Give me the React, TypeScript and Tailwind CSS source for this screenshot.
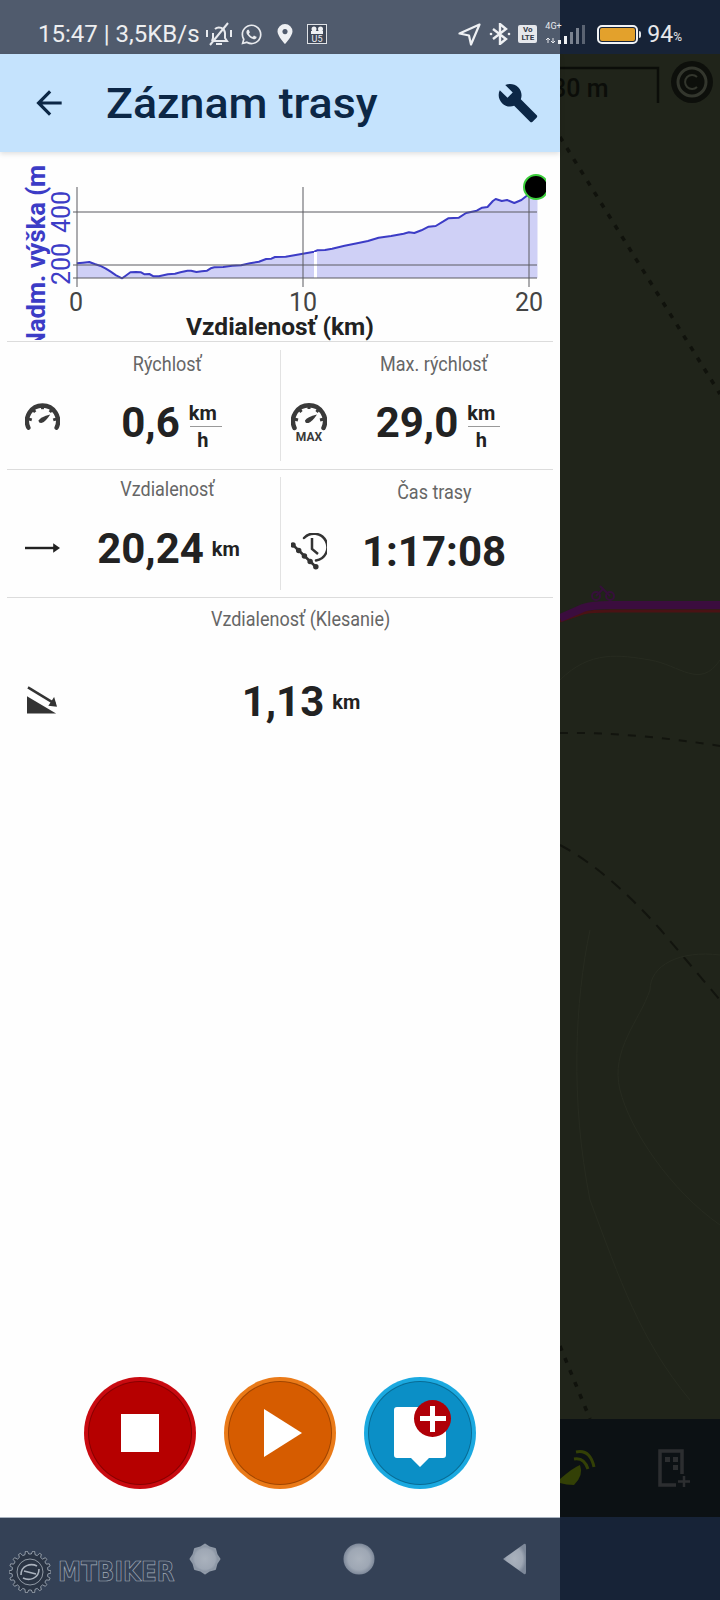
import * as React from "react";
import { MdArrowBack, MdBuild } from "react-icons/md";
import { FaWhatsapp } from "react-icons/fa";

// elevation profile, taken in zoomed coordinates and mapped back to px
const raw: Array<[number, number]> = [
  [215, 325], [232, 323], [250, 321], [265, 327], [280, 332], [295, 340], [310, 350], [325, 361], [342, 370], [352, 362], [365, 352], [380, 351], [395, 352],
  [405, 358], [418, 357], [430, 364], [445, 364], [470, 358], [490, 356], [505, 352], [525, 347], [535, 347], [550, 351], [565, 349], [580, 347], [590, 340], [600, 337],
  [625, 336], [650, 332], [675, 331], [700, 325], [725, 320], [745, 312], [760, 311], [770, 306], [800, 305], [840, 298], [880, 290],
  [888, 286], [910, 285], [930, 281], [965, 272], [1000, 265], [1030, 258], [1060, 248], [1095, 243], [1130, 236], [1145, 232], [1160, 234], [1180, 226], [1200, 215], [1220, 213],
  [1240, 200], [1255, 190], [1285, 188], [1305, 174], [1335, 167], [1350, 158], [1365, 156], [1380, 138], [1388, 132], [1405, 138], [1420, 135],
  [1440, 144], [1460, 135], [1475, 122], [1505, 100],
];
const CHART_TOP = 153;
const pts = raw.map(([x, y]) => [x / 2.8, 155 + y / 3 - CHART_TOP] as const);
const line = pts.map(([x, y]) => `${x.toFixed(1)},${y.toFixed(1)}`).join(" ");
const BASE = 278 - CHART_TOP;
const area = `77,${BASE} ${line} 537.5,${BASE}`;

function Chart() {
  const font = { fontFamily: "Roboto, sans-serif" };
  return (
    <svg width={560} height={188} className="mt-[1px] block shrink-0" style={font}>
      <polygon points={area} fill="#cfd0f6" />
      <polyline points={line} fill="none" stroke="#3c3cc6" strokeWidth={2} strokeLinejoin="round" />
      <rect x={314} y={99} width={3} height={BASE - 99} fill="#ffffff" />
      <g stroke="#5a5a60" strokeWidth={1}>
        <line x1={77} y1={34} x2={77} y2={134} />
        <line x1={303} y1={34} x2={303} y2={134} />
        <line x1={529} y1={34} x2={529} y2={134} />
        <line x1={73} y1={59} x2={537} y2={59} />
        <line x1={73} y1={112} x2={537} y2={112} />
        <line x1={73} y1={125} x2={537} y2={125} />
      </g>
      <clipPath id="dot">
        <rect x={500} y={0} width={46} height={80} />
      </clipPath>
      <circle cx={536} cy={34} r={12} fill="#000000" stroke="#3ccf3c" strokeWidth={2} clipPath="url(#dot)" />
      <g fill="#444444" fontSize={25} textAnchor="middle">
        <text x={76} y={158}>0</text>
        <text x={303} y={158}>10</text>
        <text x={529} y={158}>20</text>
      </g>
      <text x={280} y={182} textAnchor="middle" fontSize={24.5} fontWeight={700} fill="#222222">
        Vzdialenosť (km)
      </text>
      <g fill="#3c3cc6" fontSize={25} textAnchor="middle">
        <text transform="translate(70 111) rotate(-90)">200</text>
        <text transform="translate(70 59) rotate(-90)">400</text>
      </g>
      <clipPath id="axis">
        <rect x={20} y={12} width={32} height={175} />
      </clipPath>
      <g clipPath="url(#axis)">
        <text transform="translate(45 100) rotate(-90)" textAnchor="middle" fontSize={25.5} fontWeight={700} fill="#3c3cc6">
          Nadm. výška (m)
        </text>
      </g>
    </svg>
  );
}

function Gauge({ max }: { max?: boolean }) {
  return (
    <svg width={36} height={max ? 40 : 28} viewBox={max ? "0 0 36 40" : "0 0 36 28"} className="block">
      <path d="M3.5 27 A16 16 0 1 1 32.5 27" transform="translate(0 -1)" fill="none" stroke="#3a3a3a" strokeWidth={4.5} strokeLinecap="round" />
      <g stroke="#3a3a3a" strokeWidth={3}>
        <line x1={18} y1={3} x2={18} y2={7} />
        <line x1={8} y1={7} x2={10.5} y2={10} />
        <line x1={28} y1={7} x2={25.5} y2={10} />
        <line x1={3} y1={17} x2={7} y2={18} />
        <line x1={33} y1={17} x2={29} y2={18} />
      </g>
      <path d="M14 18.5 Q16 15 26 12.5 Q21 20 17.5 21 Q14 21.5 14 18.5Z" fill="#3a3a3a" />
      {max && (
        <text x={18} y={38.5} textAnchor="middle" fontSize={12} fontWeight={700} fill="#3a3a3a" fontFamily="Roboto, sans-serif">
          MAX
        </text>
      )}
    </svg>
  );
}

function ArrowRight() {
  return (
    <svg width={36} height={12} viewBox="0 0 36 12" className="block">
      <line x1={0} y1={6} x2={30} y2={6} stroke="#222222" strokeWidth={2.5} />
      <path d="M29 1 L36 6 L29 11Z" fill="#222222" />
    </svg>
  );
}

function ClockChain() {
  return (
    <svg width={36} height={37} viewBox="0 0 36 37" className="block">
      <path d="M13 5 A13.5 13.5 0 1 1 25 27.5" fill="none" stroke="#333333" strokeWidth={2.5} strokeLinecap="round" />
      <path d="M21 5 V16 L27 21" fill="none" stroke="#333333" strokeWidth={2.5} />
      <path d="M2 12 L25 34" stroke="#333333" strokeWidth={2.5} />
      <path d="M2 12 L25 34" stroke="#333333" strokeWidth={5.5} strokeLinecap="round" strokeDasharray="0 7.9" />
    </svg>
  );
}

function Slope() {
  return (
    <svg width={32} height={28} viewBox="0 0 32 28" className="block">
      <path d="M0 10 L30 28 L0 28Z" fill="#333333" />
      <line x1={1} y1={1} x2={29} y2={18} stroke="#333333" strokeWidth={2.5} />
      <path d="M31 21 L22 20 L28 11Z" fill="#333333" />
    </svg>
  );
}

function KmH() {
  return (
    <div className="mt-[8px] flex w-[32px] flex-col items-center font-bold leading-none text-[#222222]">
      <span className="pr-[6px] text-[20px] leading-[22px]">km</span>
      <span className="my-[2px] block h-[1px] w-full bg-[#999999]" />
      <span className="pr-[6px] text-[20px] leading-[22px]">h</span>
    </div>
  );
}

type MetricProps = {
  label: string;
  value: string;
  icon: React.ReactNode;
  unit?: "km" | "kmh";
  labelPad: string;
  valueTop: string;
  iconTop: string;
  columns: string;
  rowH: string;
  shift?: string;
};

function Metric({ label, value, icon, unit, labelPad, valueTop, iconTop, columns, rowH, shift }: MetricProps) {
  return (
    <div className={`grid ${columns} ${rowH}`}>
      <div />
      <div className={`text-center text-[#666666] ${labelPad}`}>
        <span className="inline-block origin-center scale-x-[0.9] whitespace-nowrap text-[20px] leading-[24px]">{label}</span>
      </div>
      <div className={`flex items-center self-start ${iconTop}`}>{icon}</div>
      <div className={`flex items-center justify-center self-start ${valueTop} ${shift ?? ""}`}>
        <span className="text-[42px] font-bold leading-[48px] text-[#222222]">{value}</span>
        {unit === "km" && <span className="ml-[8px] text-[20px] font-bold text-[#222222]">km</span>}
        {unit === "kmh" && (
          <div className="ml-[10px]">
            <KmH />
          </div>
        )}
      </div>
    </div>
  );
}

function StatusBar() {
  return (
    <div className="absolute left-0 top-0 flex h-[54px] w-[720px] items-center pt-[14px] text-white/90">
      <span className="ml-[38px] w-[164px] whitespace-nowrap text-[24px] leading-none">15:47 | 3,5KB/s</span>
      {/* muted bell */}
      <svg width={30} height={24} viewBox="0 0 30 24" className="ml-[2px]" fill="none" stroke="#e8eaee" strokeWidth={2}>
        <path d="M8 19 h15 l-2 -3 v-5 a6 6 0 0 0 -10 -4 M9 11 v5 l-1 3" />
        <path d="M12 22 h6" />
        <path d="M6 23 L24 1" />
        <path d="M3 8 v7 M27 8 v7" />
      </svg>
      <FaWhatsapp size={23} color="#e8eaee" className="ml-[6px]" />
      <svg width={16} height={20} viewBox="0 0 16 20" className="ml-[14px]">
        <path fillRule="evenodd" fill="#eef0f3" d="M8 0 a7.5 7.5 0 0 1 7.5 7.5 C15.5 12 8 20 8 20 S.5 12 .5 7.5 A7.5 7.5 0 0 1 8 0Z M8 5 a2.6 2.6 0 1 0 .01 0Z" />
      </svg>
      <svg width={20} height={20} viewBox="0 0 20 20" className="ml-[14px]" style={{ fontFamily: "Roboto, sans-serif" }}>
        <rect x={0.5} y={0.5} width={19} height={19} fill="#3f4858" stroke="#dfe2e6" />
        <circle cx={7} cy={5} r={2.5} fill="#eef0f3" />
        <circle cx={13.5} cy={5} r={2.5} fill="#eef0f3" />
        <rect x={4} y={7} width={12} height={3} fill="#eef0f3" />
        <text x={10} y={18} textAnchor="middle" fontSize={9} fill="#eef0f3">U5</text>
      </svg>
      <div className="flex-1" />
      <svg width={23} height={23} viewBox="0 0 23 23" fill="none" stroke="#eef0f3" strokeWidth={2.2} strokeLinejoin="round">
        <path d="M21.5 1.5 L1.5 10.5 L11 12.5 L13 21.5Z" />
      </svg>
      <svg width={22} height={22} viewBox="0 0 22 22" className="ml-[8px]" fill="none" stroke="#eef0f3" strokeWidth={2.4}>
        <path d="M4 6 L17 16 L11 21 V1 L17 6 L4 16" />
        <circle cx={2} cy={11} r={1.3} fill="#eef0f3" stroke="none" />
        <circle cx={20} cy={11} r={1.3} fill="#eef0f3" stroke="none" />
      </svg>
      <div className="ml-[7px] flex h-[18px] w-[19px] flex-col items-center justify-center rounded-[2px] bg-[#e6e8ec] font-[Roboto,sans-serif] text-[8px] font-bold leading-[8px] text-[#333b49]">
        <span>Vo</span>
        <span>LTE</span>
      </div>
      {/* 4G+ and signal */}
      <div className="relative ml-[8px] h-[22px] w-[44px]">
        <span className="absolute left-0 top-[-2px] text-[9px] leading-[10px] text-[#e8eaee]">4G+</span>
        <svg width={44} height={22} viewBox="0 0 44 22" className="absolute left-0 top-0">
          <path d="M3 15 v5 M1 17 l2 -2 l2 2 M8 20 v-5 M6 18 l2 2 l2 -2" stroke="#e8eaee" strokeWidth={1} fill="none" />
          <rect x={13} y={17} width={3} height={4} fill="#eef0f3" />
          <rect x={19} y={13} width={3} height={8} fill="#eef0f3" />
          <rect x={25} y={9} width={3} height={12} fill="#7a8290" />
          <rect x={31} y={5} width={3} height={16} fill="#7a8290" />
          <rect x={37} y={2} width={3} height={19} fill="#5a6372" />
        </svg>
      </div>
      <div className="ml-[8px] flex items-center">
        <div className="flex h-[19px] w-[41px] items-center justify-center rounded-[5px] border-2 border-[#f2f3f5]">
          <div className="h-[13px] w-[35px] rounded-[2px] bg-[#e3a12c]" />
        </div>
        <div className="ml-[1px] h-[7px] w-[2px] rounded-r-sm bg-[#dfe2e6]" />
      </div>
      <span className="ml-[6px] text-[23px] leading-none">94</span>
      <span className="mr-[38px] mt-[6px] text-[12px] leading-none">%</span>
    </div>
  );
}

function Header() {
  return (
    <div className="z-10 flex h-[98px] shrink-0 items-center bg-[#c5e3fd] text-[#0c2746] shadow-[0_2px_5px_rgba(0,0,0,0.12)]">
      <MdArrowBack size={38} className="ml-[30px]" />
      <h1 className="ml-[38px] inline-block origin-left scale-x-[1.04] whitespace-nowrap text-[43px] font-medium leading-none">
        Záznam trasy
      </h1>
      <div className="flex-1" />
      <MdBuild size={42} className="mr-[21px]" />
    </div>
  );
}

function RoundButton({ ring, fill, children }: { ring: string; fill: string; children: React.ReactNode }) {
  return (
    <div className={`flex h-[112px] w-[112px] items-center justify-center rounded-full ${ring} p-[4px]`}>
      <div className={`relative flex h-full w-full items-center justify-center rounded-full border border-black/25 ${fill}`}>
        {children}
      </div>
    </div>
  );
}

function gearPath(cx: number, cy: number, r1: number, r2: number, teeth: number) {
  const out: string[] = [];
  for (let i = 0; i < teeth; i++) {
    const step = (Math.PI * 2) / teeth;
    const a = i * step;
    const ps = [
      [r1, a - step * 0.3],
      [r2, a - step * 0.15],
      [r2, a + step * 0.15],
      [r1, a + step * 0.3],
    ];
    ps.forEach(([r, t]) => out.push(`${(cx + r * Math.cos(t)).toFixed(1)},${(cy + r * Math.sin(t)).toFixed(1)}`));
  }
  return out.join(" ");
}

function NavBar() {
  return (
    <div className="relative flex h-[83px] shrink-0 items-start border-t border-[#a9b3c0] bg-[#344156] pt-[25px]">
      <svg width={0} height={0} className="absolute">
        <defs>
          <radialGradient id="navGlow">
            <stop offset="0%" stopColor="#aab2bd" />
            <stop offset="70%" stopColor="#9ea7b4" />
            <stop offset="100%" stopColor="#7d8899" />
          </radialGradient>
        </defs>
      </svg>
      <svg width={42} height={42} viewBox="0 0 42 42" className="absolute left-[9px] top-[33px]">
        <polygon points={gearPath(21, 21, 18, 21, 18)} fill="#2a3444" stroke="#aab2bd" strokeWidth={0.8} />
        <circle cx={21} cy={21} r={13} fill="none" stroke="#aab2bd" strokeWidth={0.8} />
        <path d="M12 24 C12 14 22 12 28 15 M30 18 C30 28 20 30 14 27 M15 20 L27 23" fill="none" stroke="#aab2bd" strokeWidth={1.6} />
      </svg>
      <span className="absolute left-[58px] top-[41px] origin-left scale-x-[0.89] font-[DejaVu_Sans,sans-serif] text-[26px] font-bold leading-[26px] text-transparent [-webkit-text-stroke:0.7px_#a3acb9]">
        MTBIKER
      </span>
      <svg width={32} height={32} viewBox="0 0 32 32" className="ml-[189px]">
        <polygon
          points="16,1.5 20.5,4.5 26,6 27.5,11.5 30.5,16 27.5,20.5 26,26 20.5,27.5 16,30.5 11.5,27.5 6,26 4.5,20.5 1.5,16 4.5,11.5 6,6 11.5,4.5"
          fill="url(#navGlow)"
          stroke="#8f99a7"
          strokeWidth={2}
          strokeLinejoin="round"
        />
      </svg>
      <svg width={32} height={32} viewBox="0 0 32 32" className="ml-[122px]">
        <circle cx={16} cy={16} r={15.5} fill="url(#navGlow)" />
      </svg>
      <svg width={24} height={32} viewBox="0 0 24 32" className="ml-[127px]">
        <path d="M1 16 L22 1 Q24 0 24 3 V29 Q24 32 22 31Z" fill="url(#navGlow)" />
      </svg>
    </div>
  );
}

function MapSide() {
  return (
    <svg width={160} height={1365} viewBox="560 54 160 1365" className="block flex-1 bg-[#20241a]" style={{ fontFamily: "Roboto, sans-serif" }}>
      <path d="M560 68 H658 V103" fill="none" stroke="#0b0d09" strokeWidth={2.5} />
      <text x={552} y={97} fontSize={25} fontWeight={500} fill="#0b0d09">
        30 m
      </text>
      <circle cx={692} cy={82} r={21} fill="#0d0f0b" />
      <circle cx={692} cy={82} r={14} fill="none" stroke="#33362d" strokeWidth={3} />
      <path d="M697 77 A7 7 0 1 0 697 87" fill="none" stroke="#33362d" strokeWidth={2} />
      <path d="M560 137 L720 394" fill="none" stroke="#10120c" strokeWidth={3.5} strokeDasharray="5 8" />
      <path d="M560 733 C610 732 670 738 720 746" fill="none" stroke="#12140e" strokeWidth={2} strokeDasharray="8 9" />
      <path d="M560 845 Q607 870 660 929 L720 1000" fill="none" stroke="#12140e" strokeWidth={2} strokeDasharray="12 9" />
      <path d="M560 1346 L590 1419" fill="none" stroke="#10120c" strokeWidth={3.5} strokeDasharray="5 8" />
      {/* faint contour lines */}
      <g fill="none" stroke="#272b20" strokeWidth={1}>
        <path d="M560 680 C590 650 620 655 650 660 C680 665 700 690 720 660" />
        <path d="M720 955 C680 950 650 965 650 990 C640 1020 610 1050 620 1090 C630 1130 670 1190 720 1225" />
        <path d="M590 930 C575 1000 570 1100 590 1200 C620 1280 640 1340 690 1400" />
      </g>
      <path d="M560 621 L583 613 Q592 611 610 611 H720" fill="none" stroke="#4a1214" strokeWidth={3} />
      <path d="M560 618 L583 608 Q592 605 610 605 H720" fill="none" stroke="#3b0d3e" strokeWidth={8} />
      <g fill="none" stroke="#35103a" strokeWidth={2}>
        <circle cx={596} cy={596} r={4} />
        <circle cx={610} cy={596} r={4} />
        <path d="M596 596 L603 589 L610 596 M600 586 L604 590" />
      </g>
    </svg>
  );
}

function MapBar() {
  return (
    <div className="relative h-[98px] shrink-0 overflow-hidden bg-[#0c1114]">
      <svg width={160} height={98} viewBox="0 0 160 98" className="block">
        <path d="M0 60 Q14 48 20 46 Q24 56 14 66 Q6 66 0 64 Z" fill="#334006" />
        <path d="M14 40 Q24 38 28 50 M16 33 Q30 30 34 48" fill="none" stroke="#334006" strokeWidth={3} />
        <path d="M122 55 V32 H100 V66 H116" fill="none" stroke="#2c2e30" strokeWidth={3.5} />
        <rect x={105} y={38} width={5} height={5} fill="#2c2e30" />
        <rect x={113} y={38} width={5} height={5} fill="#2c2e30" />
        <rect x={113} y={46} width={5} height={5} fill="#2c2e30" />
        <path d="M124 57 V68 M118 62.5 H130" stroke="#2c2e30" strokeWidth={2.5} />
      </svg>
    </div>
  );
}

export default function App() {
  const leftCols = "grid-cols-[35px_215px] grid-rows-[auto_1fr]";
  const rightCols = "grid-cols-[36px_214px] grid-rows-[auto_1fr]";
  return (
    <div className="relative flex h-[1600px] w-[720px] overflow-hidden font-[Roboto,sans-serif]">
      <div className="flex h-full w-[560px] shrink-0 flex-col bg-[#fefefe]">
        <div className="h-[54px] shrink-0 bg-[#505b6d]" />
        <Header />
        <Chart />

        <div className="mx-[7px] flex h-[128px] shrink-0 border-t border-[#dcdcdc]">
          <div className="w-[273px] pl-[18px]">
            <Metric
              label="Rýchlosť"
              value="0,6"
              unit="kmh"
              icon={<Gauge />}
              labelPad="pt-[10px]"
              valueTop="mt-[16px]"
              iconTop="mt-[24px]"
              shift="pl-[8px]"
              columns={leftCols}
              rowH="h-[126px]"
            />
          </div>
          <div className="my-[8px] w-[1px] bg-[#e2e2e2]" />
          <div className="flex-1 pl-[10px]">
            <Metric
              label="Max. rýchlosť"
              value="29,0"
              unit="kmh"
              icon={<Gauge max />}
              labelPad="pt-[10px]"
              valueTop="mt-[16px]"
              iconTop="mt-[24px]"
              shift="pl-[8px]"
              columns={rightCols}
              rowH="h-[126px]"
            />
          </div>
        </div>

        <div className="mx-[7px] flex h-[128px] shrink-0 border-t border-[#dcdcdc]">
          <div className="w-[273px] pl-[18px]">
            <Metric
              label="Vzdialenosť"
              value="20,24"
              unit="km"
              icon={<ArrowRight />}
              labelPad="pt-[7px]"
              valueTop="mt-[22px]"
              iconTop="mt-[39px]"
              shift="pl-[2px]"
              columns={leftCols}
              rowH="h-[126px]"
            />
          </div>
          <div className="my-[7px] w-[1px] bg-[#e2e2e2]" />
          <div className="flex-1 pl-[10px]">
            <Metric
              label="Čas trasy"
              value="1:17:08"
              icon={<ClockChain />}
              labelPad="pt-[10px]"
              valueTop="mt-[22px]"
              iconTop="mt-[27px]"
              columns={rightCols}
              rowH="h-[126px]"
            />
          </div>
        </div>

        <div className="mx-[7px] shrink-0 border-t border-[#dcdcdc] pl-[20px]">
          <Metric
            label="Vzdialenosť (Klesanie)"
            value="1,13"
            unit="km"
            icon={<Slope />}
            labelPad="pt-[9px]"
            valueTop="mt-[45px]"
            iconTop="mt-[53px]"
            columns="grid-cols-[31px_486px] grid-rows-[auto_1fr]"
            rowH="h-[140px]"
          />
        </div>

        <div className="flex-1" />

        <div className="flex h-[140px] shrink-0 items-start justify-start gap-[28px] pl-[84px]">
          <RoundButton ring="bg-[#c90a10]" fill="bg-[#b60000]">
            <div className="h-[38px] w-[38px] bg-white" />
          </RoundButton>
          <RoundButton ring="bg-[#ea7a18]" fill="bg-[#d65c00]">
            <svg width={38} height={48} viewBox="0 0 38 48" className="ml-[6px]">
              <path d="M0 0 L38 24 L0 48Z" fill="#ffffff" />
            </svg>
          </RoundButton>
          <RoundButton ring="bg-[#1ba9e0]" fill="bg-[#0b8fc6]">
            <svg width={52} height={61} viewBox="0 0 52 61" className="mt-[8px]">
              <path d="M3 0 H49 Q52 0 52 3 V48 Q52 51 49 51 H35 L26 60 L17 51 H3 Q0 51 0 48 V3 Q0 0 3 0Z" fill="#ffffff" />
            </svg>
            <div className="absolute left-[45px] top-[18px] flex h-[37px] w-[37px] items-center justify-center rounded-full bg-[#b00008]">
              <div className="absolute h-[26px] w-[5px] bg-white" />
              <div className="absolute h-[5px] w-[26px] bg-white" />
            </div>
          </RoundButton>
        </div>

        <NavBar />
      </div>

      <div className="flex h-full w-[160px] flex-col">
        <div className="h-[54px] shrink-0 bg-[#172337]" />
        <MapSide />
        <MapBar />
        <div className="h-[83px] shrink-0 bg-[#172337]" />
      </div>

      <StatusBar />
    </div>
  );
}
